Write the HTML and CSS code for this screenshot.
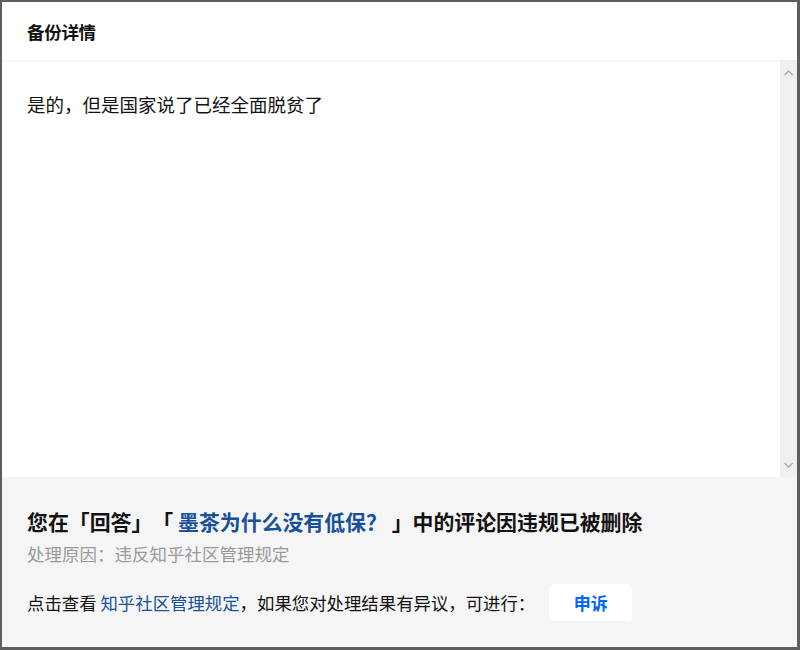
FILE: index.html
```html
<!DOCTYPE html>
<html lang="zh-CN">
<head>
<meta charset="utf-8">
<title>备份详情</title>
<link rel="stylesheet" href="styles.css">
</head>
<body>
<div class="dialog">
  <div class="dialog-header">备份详情</div>
  <div class="dialog-body">
    <div class="content">是的，但是国家说了已经全面脱贫了</div>
    <div class="scrollbar">
      <svg class="arrow" width="11" height="8" viewBox="0 0 11 8"><path d="M1.5 6 L5.5 2 L9.5 6" fill="none" stroke="#a8a8a8" stroke-width="1.4"/></svg>
      <svg class="arrow" width="11" height="8" viewBox="0 0 11 8"><path d="M1.5 2 L5.5 6 L9.5 2" fill="none" stroke="#a8a8a8" stroke-width="1.4"/></svg>
    </div>
  </div>
  <div class="dialog-footer">
    <div class="notice-title">您在「回答」「 <span class="link-dark">墨茶为什么没有低保？</span> 」中的评论因违规已被删除</div>
    <div class="notice-reason">处理原因：违反知乎社区管理规定</div>
    <div class="notice-row">
      <span>点击查看 <span class="link-dark">知乎社区管理规定</span>，如果您对处理结果有异议，可进行：</span>
      <button class="appeal">申诉</button>
    </div>
  </div>
</div>
</body>
</html>
```
FILE: styles.css
```css
html, body {
  margin: 0;
  padding: 0;
  background: #5e5e5e;
  font-family: "Noto Sans CJK SC", "Noto Sans", sans-serif;
  color: #121212;
}
.dialog {
  margin: 2px 3px 0 2px;
  width: 795px;
  height: 645px;
  background: #ffffff;
  display: flex;
  flex-direction: column;
  text-spacing-trim: space-all;
}
.dialog-header {
  height: 58px;
  border-bottom: 1px solid #f0f0f0;
  padding: 0 25px;
  display: flex;
  align-items: center;
  font-size: 17.5px;
  font-weight: 700;
  letter-spacing: -0.3px;
}
.dialog-body {
  height: 416px;
  display: flex;
}
.content {
  flex: 1;
  padding: 30px 25px 0;
  font-size: 18.5px;
  line-height: 26px;
}
.scrollbar {
  width: 17px;
  background: #f0f0f0;
  display: flex;
  flex-direction: column;
  justify-content: space-between;
  align-items: center;
  padding: 8px 0;
}
.arrow {
  display: block;
}
.dialog-footer {
  flex: 1;
  background: #f5f5f5;
  padding: 30px 25px 0;
}
.notice-title {
  font-size: 20.9px;
  font-weight: 700;
  line-height: 28px;
  white-space: nowrap;
}
.link-dark {
  color: #175199;
}
.notice-title .link-dark {
  font-weight: 700;
}
.notice-reason {
  margin-top: 7px;
  font-size: 17.5px;
  line-height: 24px;
  color: #9a9a9a;
}
.notice-row {
  margin-top: 18px;
  display: flex;
  align-items: center;
  font-size: 17.4px;
  line-height: 24px;
  white-space: nowrap;
}
.appeal {
  margin-left: 14px;
  width: 83px;
  height: 37px;
  border: none;
  border-radius: 5px;
  background: #ffffff;
  color: #0066ff;
  font-family: "Noto Sans CJK SC", sans-serif;
  font-size: 17px;
  font-weight: 700;
  padding: 0;
  text-spacing-trim: space-all;
}
```
